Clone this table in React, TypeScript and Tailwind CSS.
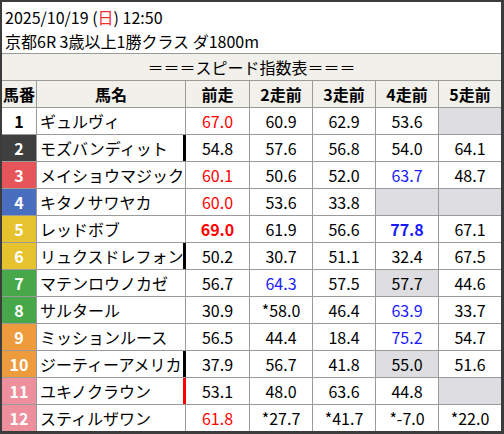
import React from "react";

type Row = {
  no: number;
  name: string;
  waku: string;
  noText: string;
  mark?: "black" | "red";
  vals: (string | null)[];
  // per-column style: r = red, b = blue, rb = red bold, bb = blue bold
  tones?: Record<number, "r" | "b" | "rb" | "bb">;
  gray?: number[];
};

const rows: Row[] = [
  { no: 1, name: "ギュルヴィ", waku: "bg-white", noText: "text-black", vals: ["67.0", "60.9", "62.9", "53.6", null], tones: { 0: "r" }, gray: [4] },
  { no: 2, name: "モズバンディット", waku: "bg-[#3f3f3f]", noText: "text-white", mark: "black", vals: ["54.8", "57.6", "56.8", "54.0", "64.1"] },
  { no: 3, name: "メイショウマジック", waku: "bg-[#e65559]", noText: "text-white", vals: ["60.1", "50.6", "52.0", "63.7", "48.7"], tones: { 0: "r", 3: "b" } },
  { no: 4, name: "キタノサワヤカ", waku: "bg-[#4a6ebf]", noText: "text-white", vals: ["60.0", "53.6", "33.8", null, null], tones: { 0: "r" }, gray: [3, 4] },
  { no: 5, name: "レッドボブ", waku: "bg-[#e6c22f]", noText: "text-white", vals: ["69.0", "61.9", "56.6", "77.8", "67.1"], tones: { 0: "rb", 3: "bb" } },
  { no: 6, name: "リュクスドレフォン", waku: "bg-[#e6c22f]", noText: "text-white", mark: "black", vals: ["50.2", "30.7", "51.1", "32.4", "67.5"] },
  { no: 7, name: "マテンロウノカゼ", waku: "bg-[#47a84a]", noText: "text-white", vals: ["56.7", "64.3", "57.5", "57.7", "44.6"], tones: { 1: "b" }, gray: [3] },
  { no: 8, name: "サルタール", waku: "bg-[#47a84a]", noText: "text-white", vals: ["30.9", "*58.0", "46.4", "63.9", "33.7"], tones: { 3: "b" } },
  { no: 9, name: "ミッションルース", waku: "bg-[#ee9b3e]", noText: "text-white", vals: ["56.5", "44.4", "18.4", "75.2", "54.7"], tones: { 3: "b" } },
  { no: 10, name: "ジーティーアメリカ", waku: "bg-[#ee9b3e]", noText: "text-white", mark: "black", vals: ["37.9", "56.7", "41.8", "55.0", "51.6"], gray: [3] },
  { no: 11, name: "ユキノクラウン", waku: "bg-[#ee8f9e]", noText: "text-white", mark: "red", vals: ["53.1", "48.0", "63.6", "44.8", null], gray: [4] },
  { no: 12, name: "スティルザワン", waku: "bg-[#ee8f9e]", noText: "text-white", vals: ["61.8", "*27.7", "*41.7", "*-7.0", "*22.0"], tones: { 0: "r" } },
];

const valWidths = ["w-[64px]", "w-[63px]", "w-[63px]", "w-[63px]", "w-[62px]"];

function toneClass(t?: string) {
  if (t === "r") return "text-[#ff0000]";
  if (t === "b") return "text-[#1a1aff]";
  if (t === "rb") return "text-[#ff0000] font-bold";
  if (t === "bb") return "text-[#1a1aff] font-bold";
  return "text-black";
}

export default function App() {
  return (
    <div
      className="w-[504px] h-[434px] bg-white border-[#3c3c3c] border-l-2 border-t-2 border-r-[3px] border-b-[3px] text-black"
      style={{ fontFamily: '"Noto Sans CJK JP", "Noto Sans", sans-serif' }}
    >
      {/* race info */}
      <div className="h-[51px] px-[3px] pt-[3px] text-[16px] leading-[24px]">
        <div>
          2025/10/19 (<span className="text-[#f03030]">日</span>) 12:50
        </div>
        <div>京都6R 3歳以上1勝クラス ダ1800m</div>
      </div>

      {/* title */}
      <div className="h-[28px] border-y border-[#9a9a9a] bg-[#f1f0eb] flex items-center justify-center text-[16px]">
        ＝＝＝スピード指数表＝＝＝
      </div>

      {/* header row */}
      <div className="h-[27px] flex border-b border-[#9a9a9a] bg-[#f1f0eb] text-[16px] font-bold">
        <div className="w-[35px] border-r border-[#9a9a9a] flex items-center justify-center">馬番</div>
        <div className="w-[149px] border-r border-[#9a9a9a] flex items-center justify-center">馬名</div>
        {["前走", "2走前", "3走前", "4走前", "5走前"].map((h, i) => (
          <div
            key={h}
            className={`${valWidths[i]} ${i < 4 ? "border-r border-[#9a9a9a]" : ""} flex items-center justify-center`}
          >
            {h}
          </div>
        ))}
      </div>

      {/* horses */}
      {rows.map((r, ri) => (
        <div
          key={r.no}
          className={`flex text-[16px] ${ri < rows.length - 1 ? "h-[27px] border-b border-[#9a9a9a]" : "h-[26px]"}`}
        >
          <div
            className={`w-[35px] border-r border-[#9a9a9a] ${r.waku} ${r.noText} font-bold flex items-center justify-center`}
          >
            {r.no}
          </div>
          <div
            className={`w-[149px] border-r pl-[3px] flex items-center whitespace-nowrap overflow-hidden ${
              r.mark === "black"
                ? "border-black shadow-[inset_-2px_0_0_#000]"
                : r.mark === "red"
                ? "border-[#ff0000] shadow-[inset_-2px_0_0_#ff0000]"
                : "border-[#9a9a9a]"
            }`}
          >
            {r.name}
          </div>
          {r.vals.map((v, i) => (
            <div
              key={i}
              className={`${valWidths[i]} ${i < 4 ? "border-r border-[#9a9a9a]" : ""} ${
                r.gray?.includes(i) ? "bg-[#dedee2]" : ""
              } ${toneClass(r.tones?.[i])} flex items-center justify-center`}
            >
              {v}
            </div>
          ))}
        </div>
      ))}
    </div>
  );
}
